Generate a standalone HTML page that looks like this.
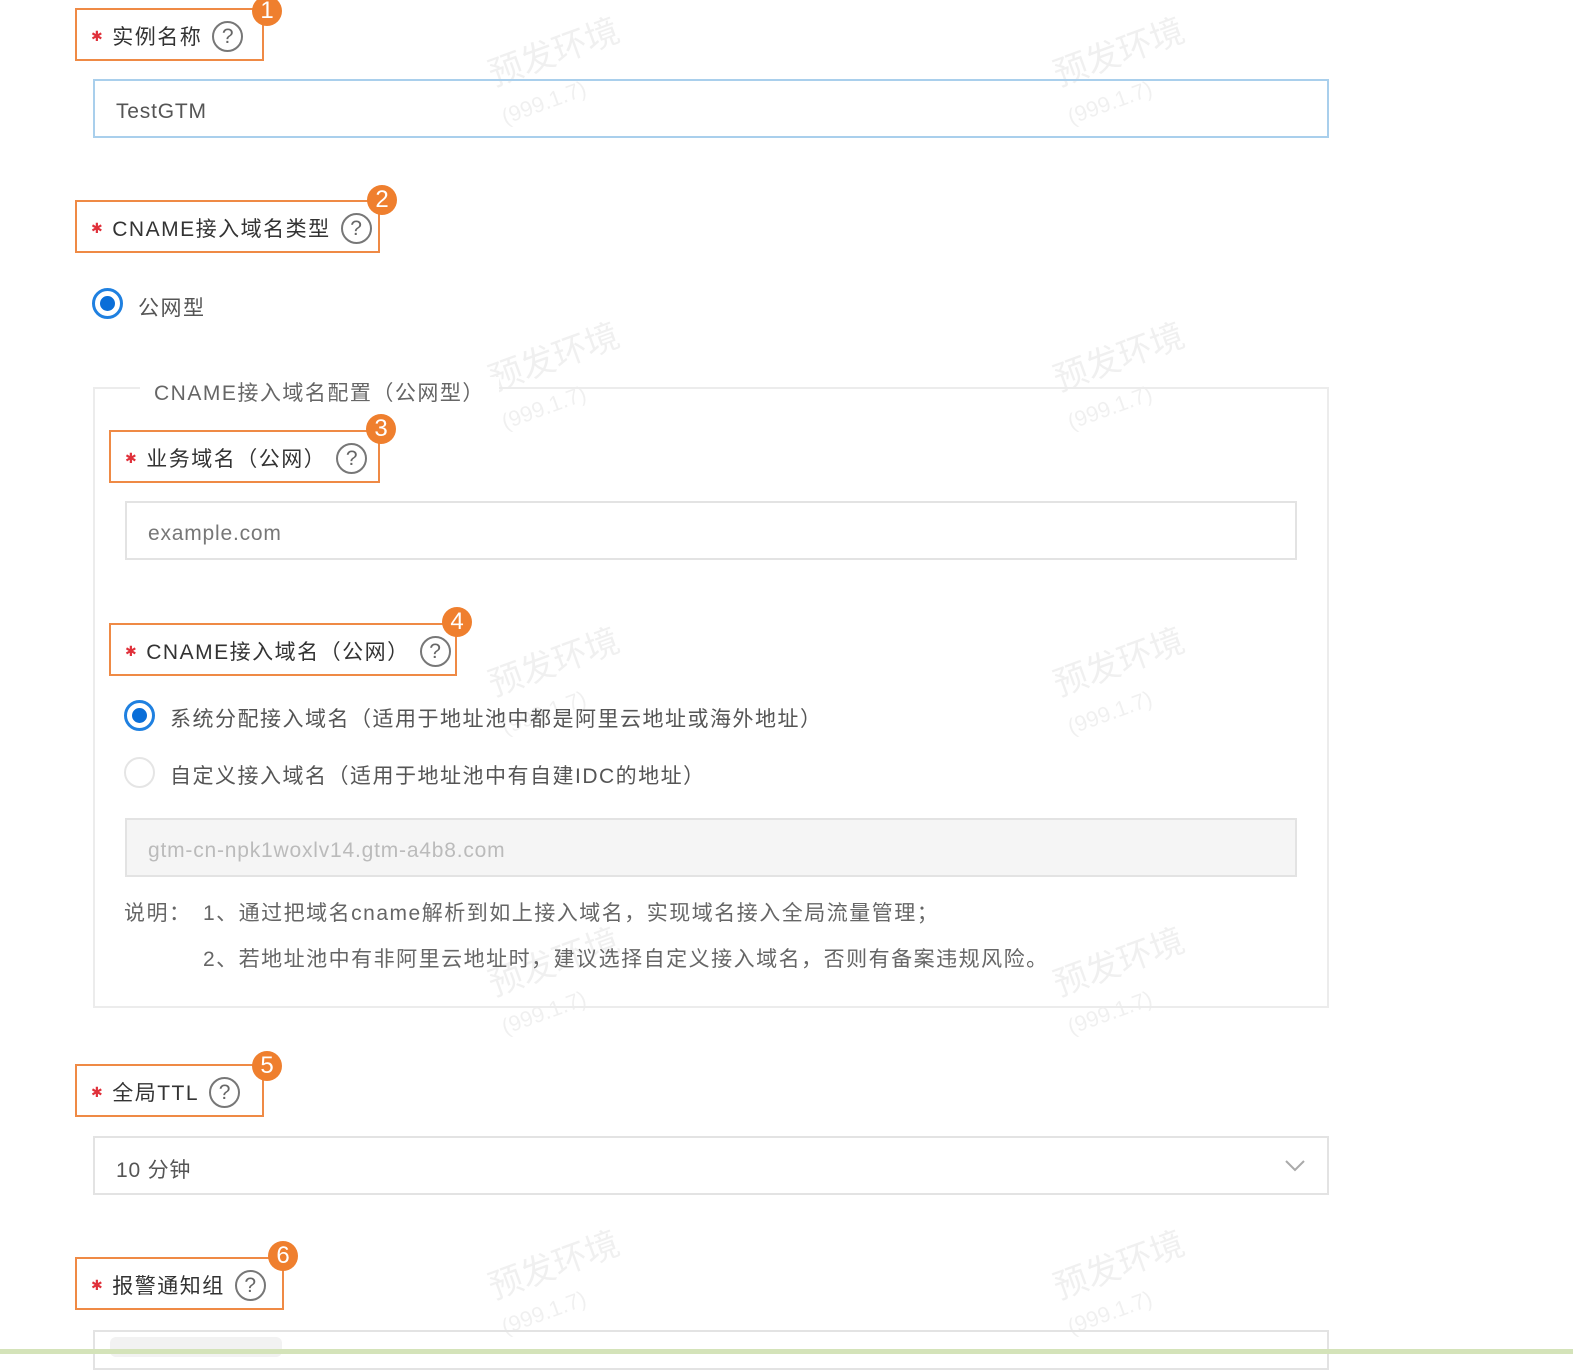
<!DOCTYPE html><html><head><meta charset="utf-8"><style>
*{margin:0;padding:0;box-sizing:border-box}
body{width:1573px;height:1354px;background:#fff;position:relative;overflow:hidden;font-family:"Liberation Sans","Noto Sans CJK SC",sans-serif;color:#333;font-size:21px;letter-spacing:1.5px}
.a{position:absolute}
.box{position:absolute;border:2px solid #ef8a45;height:53px;display:flex;align-items:center;padding-left:14px;white-space:nowrap;padding-top:3px}
.box .s{color:#e0303a;font-size:14px;margin-right:8px}
.q{display:inline-block;width:31px;height:31px;border:2px solid #777;border-radius:50%;text-align:center;line-height:27px;font-size:21px;color:#666;margin-left:10px;letter-spacing:0}
.b{position:absolute;width:30px;height:30px;border-radius:50%;background:#ef7f2e;color:#fff;text-align:center;line-height:30px;font-size:24px;letter-spacing:0}
.in{position:absolute;border:2px solid #e3e3e3;height:59px;display:flex;align-items:center;padding-left:21px;padding-top:6px;color:#555;letter-spacing:0.8px}
.r{position:absolute;width:31px;height:31px;border-radius:50%;border:3px solid #1f80e0}
.r i{position:absolute;left:5px;top:5px;width:15px;height:15px;border-radius:50%;background:#0a6ed8}
.t{position:absolute;white-space:nowrap;color:#555}
.w{position:absolute;color:rgba(0,0,0,0.06);font-size:34px;transform:rotate(-20deg);white-space:nowrap;letter-spacing:0}
.w2{position:absolute;color:rgba(0,0,0,0.06);font-size:22px;transform:rotate(-20deg);letter-spacing:0}
</style></head><body>
<div class="w" style="left:485px;top:25px">预发环境</div><div class="w2" style="left:500px;top:90px">(999.1.7)</div>
<div class="w" style="left:1050px;top:25px">预发环境</div><div class="w2" style="left:1066px;top:90px">(999.1.7)</div>
<div class="w" style="left:485px;top:330px">预发环境</div><div class="w2" style="left:500px;top:395px">(999.1.7)</div>
<div class="w" style="left:1050px;top:330px">预发环境</div><div class="w2" style="left:1066px;top:395px">(999.1.7)</div>
<div class="w" style="left:485px;top:635px">预发环境</div><div class="w2" style="left:500px;top:700px">(999.1.7)</div>
<div class="w" style="left:1050px;top:635px">预发环境</div><div class="w2" style="left:1066px;top:700px">(999.1.7)</div>
<div class="w" style="left:485px;top:935px">预发环境</div><div class="w2" style="left:500px;top:1000px">(999.1.7)</div>
<div class="w" style="left:1050px;top:935px">预发环境</div><div class="w2" style="left:1066px;top:1000px">(999.1.7)</div>
<div class="w" style="left:485px;top:1238px">预发环境</div><div class="w2" style="left:500px;top:1300px">(999.1.7)</div>
<div class="w" style="left:1050px;top:1238px">预发环境</div><div class="w2" style="left:1066px;top:1300px">(999.1.7)</div>

<div class="box" style="left:75px;top:8px;width:189px">
<span class="s">✱</span>实例名称<span class="q">?</span></div>
<div class="b" style="left:252px;top:-4px">1</div>
<div class="in" style="left:93px;top:79px;width:1236px;border-color:#a9cfec">TestGTM</div>

<div class="box" style="left:75px;top:200px;width:305px"><span class="s">✱</span>CNAME接入域名类型<span class="q">?</span></div>
<div class="b" style="left:367px;top:185px">2</div>
<div class="r" style="left:92px;top:288px"><i></i></div><div class="t" style="left:138px;top:292px">公网型</div>

<div class="a" style="left:93px;top:387px;width:1236px;height:621px;border:2px solid #ececec"></div>
<div class="t" style="left:140px;top:377px;background:#fff;padding:0 14px;color:#666">CNAME接入域名配置（公网型）</div>

<div class="box" style="left:109px;top:430px;width:271px"><span class="s">✱</span>业务域名（公网）<span class="q">?</span></div>
<div class="b" style="left:366px;top:414px">3</div>
<div class="in" style="left:125px;top:501px;width:1172px;color:#777">example.com</div>

<div class="box" style="left:109px;top:623px;width:348px"><span class="s">✱</span>CNAME接入域名（公网）<span class="q">?</span></div>
<div class="b" style="left:442px;top:607px">4</div>
<div class="r" style="left:124px;top:700px"><i></i></div><div class="t" style="left:170px;top:703px">系统分配接入域名（适用于地址池中都是阿里云地址或海外地址）</div>
<div class="r" style="left:124px;top:757px;border:2px solid #e5e5e5"></div><div class="t" style="left:170px;top:760px">自定义接入域名（适用于地址池中有自建IDC的地址）</div>
<div class="in" style="left:125px;top:818px;width:1172px;background:#f5f5f5;color:#bbb">gtm-cn-npk1woxlv14.gtm-a4b8.com</div>
<div class="t" style="left:124px;top:897px;color:#666">说明：</div>
<div class="t" style="left:203px;top:897px;color:#666">1、通过把域名cname解析到如上接入域名，实现域名接入全局流量管理；</div>
<div class="t" style="left:203px;top:943px;color:#666">2、若地址池中有非阿里云地址时，建议选择自定义接入域名，否则有备案违规风险。</div>

<div class="box" style="left:75px;top:1064px;width:189px"><span class="s">✱</span>全局TTL<span class="q">?</span></div>
<div class="b" style="left:252px;top:1051px">5</div>
<div class="in" style="left:93px;top:1136px;width:1236px">10 分钟</div>
<svg class="a" style="left:1284px;top:1159px" width="22" height="14"><path d="M2 2 L11 11 L20 2" fill="none" stroke="#aaa" stroke-width="2"/></svg>

<div class="box" style="left:75px;top:1257px;width:209px"><span class="s">✱</span>报警通知组<span class="q">?</span></div>
<div class="b" style="left:268px;top:1241px">6</div>
<div class="a" style="left:93px;top:1330px;width:1236px;height:40px;border:2px solid #e3e3e3"></div>
<div class="a" style="left:110px;top:1337px;width:172px;height:20px;background:#f2f2f2;border-radius:6px"></div>
<div class="a" style="left:0;top:1349px;width:1573px;height:5px;background:#d4e3b9"></div>
</body></html>
